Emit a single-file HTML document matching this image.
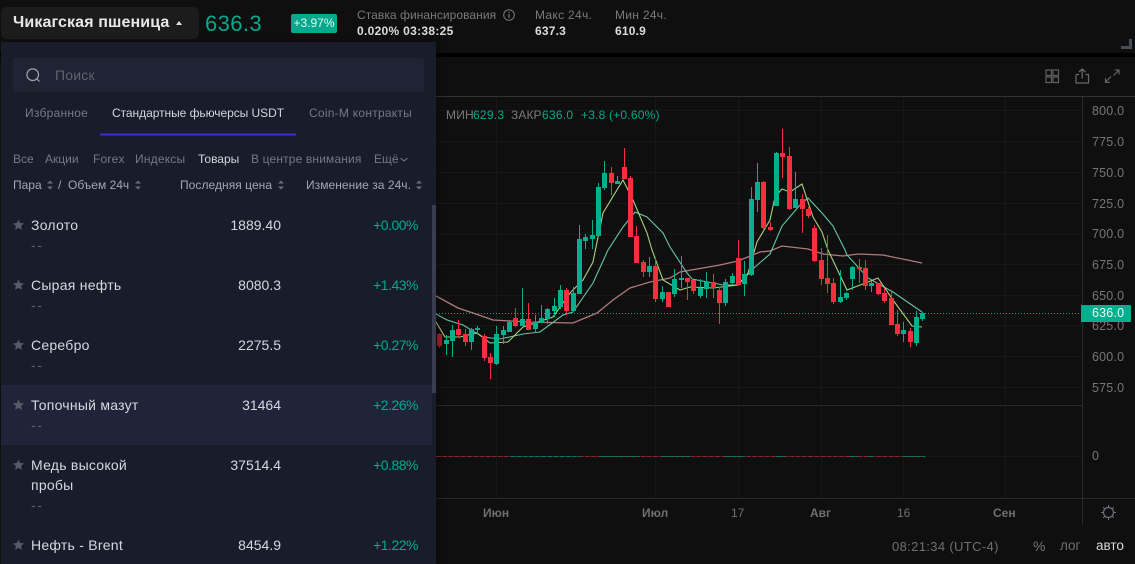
<!DOCTYPE html>
<html><head><meta charset="utf-8">
<style>
html,body{margin:0;padding:0;background:#0f0f0f;width:1135px;height:564px;overflow:hidden}
body{position:relative;font-family:"Liberation Sans","Noto Sans CJK SC",sans-serif}
.t{position:absolute;white-space:nowrap;line-height:16px;font-size:12px}
.r{text-align:right}
.g{color:#7a7a7a}
.tl{color:#02a98c}
.pl{color:#767a86}
.pr{position:absolute;left:1092px;font-size:12.5px;color:#767676;line-height:16px;white-space:nowrap;letter-spacing:.2px}
.n{position:absolute;left:31px;font-size:14px;color:#d6d8de;line-height:20px;white-space:nowrap;letter-spacing:.25px}
.d{position:absolute;left:31px;font-size:14px;color:#5c6070;line-height:20px;letter-spacing:1.6px}
.p{position:absolute;right:854px;font-size:14px;color:#d6d8de;line-height:20px}
.c{position:absolute;right:717px;font-size:14px;color:#02a98c;line-height:20px;letter-spacing:-.5px}
svg{position:absolute;left:0;top:0}
</style></head><body>

<div style="position:absolute;left:0;top:0;width:1135px;height:53px;background:#0f0f0f"></div>
<div style="position:absolute;left:0;top:53px;width:1135px;height:4px;background:#000"></div>
<div style="position:absolute;left:1px;top:7px;width:198px;height:32px;background:#1c1c1c;border-radius:5px"></div>
<div class="t" style="left:13px;top:14px;font-size:16px;line-height:18px;font-weight:bold;color:#e8e8e8;letter-spacing:.12px">Чикагская пшеница</div>
<div style="position:absolute;left:176px;top:21px;width:0;height:0;border-left:3.5px solid transparent;border-right:3.5px solid transparent;border-bottom:4px solid #ddd"></div>
<div class="t" style="left:205px;top:11px;font-size:22px;line-height:25px;color:#02a98c;letter-spacing:.4px">636.3</div>
<div style="position:absolute;left:291px;top:14px;width:46px;height:19px;background:#02a98c;border-radius:2px;color:#e8f5f0;font-size:12px;line-height:19px;text-align:center">+3.97%</div>
<div class="t g" style="left:357px;top:7px;letter-spacing:.06px">Ставка финансирования</div>
<div class="t" style="left:357px;top:23px;font-weight:bold;color:#dcdcdc;letter-spacing:.3px">0.020% 03:38:25</div>
<div class="t g" style="left:535px;top:7px;letter-spacing:.3px">Макс 24ч.</div>
<div class="t" style="left:535px;top:23px;font-weight:bold;color:#dcdcdc;letter-spacing:.2px">637.3</div>
<div class="t g" style="left:615px;top:7px;letter-spacing:.3px">Мин 24ч.</div>
<div class="t" style="left:615px;top:23px;font-weight:bold;color:#dcdcdc;letter-spacing:.2px">610.9</div>

<svg width="1135" height="564" viewBox="0 0 1135 564" fill="none">
<!-- info icon -->
<circle cx="509" cy="15" r="5.3" stroke="#777" stroke-width="1"/>
<path d="M509 14V18M509 11.6V12.8" stroke="#777" stroke-width="1.2"/>
<!-- corner -->
<path d="M1121 47.5H1130.5V39" stroke="#4a4b58" stroke-width="3"/>
<!-- frame lines -->
<path d="M436 96.5H1135" stroke="#333" />
<path d="M1082.5 97V525" stroke="#2a2a2a"/>
<path d="M436 405.5H1082" stroke="#2a2a2a"/>
<path d="M436 498.5H1135" stroke="#2a2a2a"/>
<!-- grid -->
<path d="M436 110.5H1082M436 141.5H1082M436 172.5H1082M436 203.5H1082M436 234.5H1082M436 264.5H1082M436 295.5H1082M436 325.5H1082M436 356.5H1082M436 387.5H1082M436 456.5H1082" stroke="#181818"/>
<path d="M496.5 97V498M655.5 97V498M738.5 97V498M821.5 97V498M903.5 97V498M1005.5 97V498" stroke="#181818"/>
<!-- toolbar icons -->
<path d="M1046 70H1051.5V75.5H1046ZM1053 70H1058.5V75.5H1053ZM1046 77H1051.5V82.500H1046ZM1053 77H1058.5V82.500H1053Z" stroke="#5f5f5f" stroke-width="1.2"/>
<path d="M1076 74.500V83H1088.500V74.500H1085.500M1079 74.500H1076M1082.200 78.500V69M1079 72L1082.200 69L1085.400 72" stroke="#6a6a6a" stroke-width="1.2"/>
<path d="M1105.500 82L1111 76.500M1105.500 78V82.300H1110M1119 70L1113.500 75.500M1114.500 70H1119V74.500" stroke="#6a6a6a" stroke-width="1.1"/>
<!-- dotted price line -->
<path d="M436 313.500H1082" stroke="#02a98c" stroke-width="1" stroke-dasharray="1 2"/>
<!-- MAs -->
<path d="M436 296L458 308L473 313L493 320L510 321L530 322L573 323L597 313L613 300L630 288L650 282L670 278L680 272L720 265L738 261L760 252L770 251L782 246L808 249L823 254L843 256L858 254L883 255L922 263" stroke="#b27a7c" stroke-width="1.300"/>
<path d="M436 314L447 320L463 325L483 337L500 339L523 334L540 332L563 315L573 312L593 283L608 250L623 227L635 212L647 217L663 233L670 247L687 273L692 279L723 285L738 285L755 267L770 254L782 226L800 205L808 198L822 213L833 226L845 250L847 255L868 278L893 292L922 312" stroke="#68c4a8" stroke-width="1.100"/>
<path d="M436 322L445 337L460 337L477 333L490 343L508 342L523 327L553 317L570 293L583 280L593 262L596 247L603 213L623 180L633 200L647 233L652 250L663 280L680 290L690 287L713 288L738 285L748 273L757 242L770 220L775 197L782 189L790 192L802 184L813 217L822 232L828 250L847 290L868 282L878 278L893 300L912 326L922 327" stroke="#a8d27c" stroke-width="1.100"/>
<!-- green wicks -->
<path stroke="#02b08e" stroke-width="1" d="M446.500 335V355M452.500 325V357M471.500 328V350M477.500 326V334M496.500 326V365M503.500 326V344M509.500 320V332M522.500 288V326M535.500 315V333M541.500 305V323M547.500 308V324M554.500 298V317M560.500 285V309M573.500 287V312M579.500 225V294M585.500 234V249M592.500 220V249M598.500 183V236M604.500 161V190M617.500 176V184M649.500 257V277M662.500 286V302M674.500 269V297M681.500 256V288M700.500 279V298M706.500 272V298M725.500 279V306M732.500 273V284M744.500 261V296M751.500 187V276M757.500 163V212M776.500 152V206M795.500 172V208M840.500 270V303M846.500 292V300M852.500 266V290M871.500 281V292M903.500 322V342M916.500 311V346M922.500 312V321"/>
<!-- green bodies -->
<path stroke="#02b08e" stroke-width="5" d="M446.500 340V344M452.500 330V341M471.500 329V342M477.500 328V330M496.500 334V364M503.500 330V335M509.500 322V332M522.500 319V326M535.500 322V329M541.500 318V323M547.500 309V319M554.500 306V311M560.500 290V307M573.500 293V311M579.500 239V294M585.500 237V241M592.500 235V239M598.500 187V236M604.500 173V188M617.500 181V184M649.500 266V272M662.500 292V299M674.500 279V294M681.500 278V280M700.500 288V296M706.500 282V289M725.500 282V303M732.500 276V283M744.500 274V284M751.500 199V275M757.500 182V200M776.500 153V206M795.500 199V208M840.500 297V302M846.500 293V298M852.500 267V279M871.500 283V286M903.500 330V334M916.500 317V343M922.500 313V319"/>
<!-- red wicks -->
<path stroke="#f52f3e" stroke-width="1" d="M458.500 320V337M465.500 329V346M484.500 334V361M490.500 353V379M515.500 308V327M528.500 303V330M566.500 288V315M611.500 167V195M624.500 148V179M630.500 176V237M636.500 226V263M643.500 260V277M655.500 257V302M668.500 292V307M687.500 278V300M693.500 280V294M713.500 274V298M719.500 287V324M738.500 240V285M763.500 181V229M770.500 222V231M782.500 129V178M789.500 147V210M802.500 194V233M808.500 207V218M814.500 225V262M821.500 248V285M827.500 235V293M833.500 278V304M859.500 259V283M865.500 260V290M878.500 283V295M884.500 288V303M891.500 292V325M897.500 310V336M910.500 328V347"/>
<!-- red bodies -->
<path stroke="#f52f3e" stroke-width="5" d="M458.500 329V335M465.500 334V342M484.500 336V358M490.500 357V363M515.500 318V326M528.500 319V330M566.500 290V311M611.500 173V183M624.500 167V179M630.500 178V237M636.500 236V263M643.500 262V272M655.500 266V299M668.500 292V307M687.500 278V282M693.500 280V291M713.500 282V288M719.500 290V303M738.500 258V285M763.500 182V228M770.500 227V230M782.500 153V157M789.500 156V209M802.500 199V209M808.500 209V216M814.500 228V261M821.500 260V279M827.500 278V284M833.500 283V302M859.500 267V269M865.500 268V286M878.500 283V294M884.500 293V301M891.500 298V325M897.500 324V334M910.500 331V342"/>
<!-- dim first candle -->
<path stroke="#a6222f" stroke-width="1" d="M439.500 333V348"/>
<path stroke="#a6222f" stroke-width="5" d="M439.500 334V346"/>
<!-- histogram -->
<path d="M436 456.500H925" stroke="#8a2430" stroke-width="1" stroke-dasharray="5 1.200"/>
<path d="M510 456.500H580M600 456.500H640M662 456.500H690M725 456.500H745M776 456.500H785M850 456.500H858M868 456.500H873M903 456.500H925" stroke="#027a64" stroke-width="1" stroke-dasharray="5 1.200"/>
<!-- gear -->
<circle cx="1108.500" cy="512.500" r="5" stroke="#6d7180" stroke-width="1.200"/>
<path d="M1108.500 505V507M1108.500 518V520M1101 512.500H1103M1114 512.500H1116M1103.200 507.200L1104.600 508.600M1112.400 516.400L1113.800 517.800M1113.800 507.200L1112.400 508.600M1104.600 516.400L1103.200 517.800" stroke="#6d7180" stroke-width="1"/>
</svg>

<!-- legend -->
<div class="t g" style="left:446px;top:107px;letter-spacing:.2px">МИН</div>
<div class="t tl" style="left:473px;top:107px;letter-spacing:.25px">629.3</div>
<div class="t g" style="left:511px;top:107px;letter-spacing:.1px">ЗАКР</div>
<div class="t tl" style="left:542px;top:107px;letter-spacing:.25px">636.0</div>
<div class="t tl" style="left:581px;top:107px;letter-spacing:.2px">+3.8 (+0.60%)</div>

<!-- price axis -->
<div class="pr" style="top:103px">800.0</div>
<div class="pr" style="top:134px">775.0</div>
<div class="pr" style="top:165px">750.0</div>
<div class="pr" style="top:196px">725.0</div>
<div class="pr" style="top:226px">700.0</div>
<div class="pr" style="top:257px">675.0</div>
<div class="pr" style="top:288px">650.0</div>
<div class="pr" style="top:318px">625.0</div>
<div class="pr" style="top:349px">600.0</div>
<div class="pr" style="top:380px">575.0</div>
<div class="pr" style="top:448px">0</div>
<div style="position:absolute;left:1081px;top:305px;width:39px;height:17px;background:#02b08e;color:#f0f8f5;font-size:12.5px;line-height:17px;padding-left:11px;border-radius:1px;letter-spacing:.2px">636.0</div>

<!-- time axis -->
<div class="t" style="left:483px;top:505px;font-weight:bold;color:#6f6f6f">Июн</div>
<div class="t" style="left:642px;top:505px;font-weight:bold;color:#6f6f6f">Июл</div>
<div class="t" style="left:731px;top:505px;color:#6f6f6f">17</div>
<div class="t" style="left:810px;top:505px;font-weight:bold;color:#6f6f6f">Авг</div>
<div class="t" style="left:897px;top:505px;color:#6f6f6f">16</div>
<div class="t" style="left:993px;top:505px;font-weight:bold;color:#6f6f6f">Сен</div>

<!-- bottom -->
<div class="t" style="left:892px;top:539px;font-size:13px;color:#6f6f6f;letter-spacing:.35px">08:21:34 (UTC-4)</div>
<div class="t" style="left:1033px;top:538px;font-size:14px;color:#777">%</div>
<div class="t" style="left:1060px;top:538px;font-size:13.500px;color:#6f6f6f">лог</div>
<div class="t" style="left:1096px;top:538px;font-size:13.500px;color:#d8d8d8">авто</div>

<!-- panel -->
<div style="position:absolute;left:1px;top:42px;width:435px;height:522px;background:#181c2b;box-shadow:4px 0 6px rgba(0,0,0,.25)">
<div style="position:absolute;left:0;top:343px;width:431px;height:60px;background:#20243a"></div>
<div style="position:absolute;left:431px;top:163px;width:4px;height:188px;background:#3a3d52"></div>
</div>
<div style="position:absolute;left:13px;top:58px;width:411px;height:34px;background:#1f2333;border-radius:2px"></div>
<svg width="1135" height="564" viewBox="0 0 1135 564" fill="none" style="pointer-events:none">
<circle cx="32.700" cy="74.700" r="5.800" stroke="#a0a3ad" stroke-width="1.200"/>
<path d="M37 79L39.500 81.500" stroke="#a0a3ad" stroke-width="1.200"/>
<path d="M100 134.500H296" stroke="#3d2be0" stroke-width="2"/>
<path d="M400.500 158L404 161L407.500 158" stroke="#777b88" stroke-width="1"/>
<g fill="#6a6e7c">
<path d="M47 183.500L50 180.500L53 183.500ZM47 186.500L50 189.500L53 186.500Z"/>
<path d="M135 183.500L138 180.500L141 183.500ZM135 186.500L138 189.500L141 186.500Z"/>
<path d="M278 183.500L281 180.500L284 183.500ZM278 186.500L281 189.500L284 186.500Z"/>
<path d="M416 183.500L419 180.500L422 183.500ZM416 186.500L419 189.500L422 186.500Z"/>
</g>
<g fill="#565b6a">
<path d="M18.500 219.500L20.100 223L24 223.400L21.100 226L21.900 229.800L18.500 227.900L15.100 229.800L15.900 226L13 223.400L16.900 223Z"/>
<path d="M18.500 279.500L20.100 283L24 283.400L21.100 286L21.900 289.800L18.500 287.900L15.100 289.800L15.900 286L13 283.400L16.900 283Z"/>
<path d="M18.500 339.500L20.100 343L24 343.400L21.100 346L21.900 349.800L18.500 347.900L15.100 349.800L15.900 346L13 343.400L16.900 343Z"/>
<path d="M18.500 399.500L20.100 403L24 403.400L21.100 406L21.900 409.800L18.500 407.900L15.100 409.800L15.900 406L13 403.400L16.900 403Z"/>
<path d="M18.500 459.500L20.100 463L24 463.400L21.100 466L21.900 469.800L18.500 467.900L15.100 469.800L15.900 466L13 463.400L16.900 463Z"/>
<path d="M18.500 539.500L20.100 543L24 543.400L21.100 546L21.900 549.800L18.500 547.900L15.100 549.800L15.900 546L13 543.400L16.900 543Z"/>
</g>
</svg>
<div class="t" style="left:55px;top:66px;font-size:14px;line-height:18px;color:#5f6372;letter-spacing:.2px">Поиск</div>
<div class="t pl" style="left:25px;top:105px;letter-spacing:.25px">Избранное</div>
<div class="t" style="left:112px;top:105px;color:#d4d6dc;letter-spacing:-.05px">Стандартные фьючерсы USDT</div>
<div class="t pl" style="left:309px;top:105px;letter-spacing:.25px">Coin-M контракты</div>
<div class="t pl" style="left:13px;top:151px">Все</div>
<div class="t pl" style="left:45px;top:151px">Акции</div>
<div class="t pl" style="left:93px;top:151px;letter-spacing:.2px">Forex</div>
<div class="t pl" style="left:135px;top:151px;letter-spacing:.2px">Индексы</div>
<div class="t" style="left:198px;top:151px;color:#d4d6dc">Товары</div>
<div class="t pl" style="left:251px;top:151px;letter-spacing:.15px">В центре внимания</div>
<div class="t pl" style="left:374px;top:151px">Ещё</div>
<div class="t" style="left:13px;top:177px;color:#a4a7b2">Пара</div>
<div class="t" style="left:58px;top:177px;color:#a4a7b2">/</div>
<div class="t" style="left:68px;top:177px;color:#a4a7b2">Объем 24ч</div>
<div class="t" style="left:180px;top:177px;color:#a4a7b2;letter-spacing:.05px">Последняя цена</div>
<div class="t" style="left:306px;top:177px;color:#a4a7b2;letter-spacing:.05px">Изменение за 24ч.</div>

<div class="n" style="top:215px">Золото</div><div class="d" style="top:235px">--</div><div class="p" style="top:215px">1889.40</div><div class="c" style="top:215px">+0.00%</div>
<div class="n" style="top:275px">Сырая нефть</div><div class="d" style="top:295px">--</div><div class="p" style="top:275px">8080.3</div><div class="c" style="top:275px">+1.43%</div>
<div class="n" style="top:335px">Серебро</div><div class="d" style="top:355px">--</div><div class="p" style="top:335px">2275.5</div><div class="c" style="top:335px">+0.27%</div>
<div class="n" style="top:395px">Топочный мазут</div><div class="d" style="top:415px">--</div><div class="p" style="top:395px">31464</div><div class="c" style="top:395px">+2.26%</div>
<div class="n" style="top:455px">Медь высокой</div><div class="n" style="top:475px">пробы</div><div class="d" style="top:495px">--</div><div class="p" style="top:455px">37514.4</div><div class="c" style="top:455px">+0.88%</div>
<div class="n" style="top:535px">Нефть - Brent</div><div class="p" style="top:535px">8454.9</div><div class="c" style="top:535px">+1.22%</div>
</body></html>
